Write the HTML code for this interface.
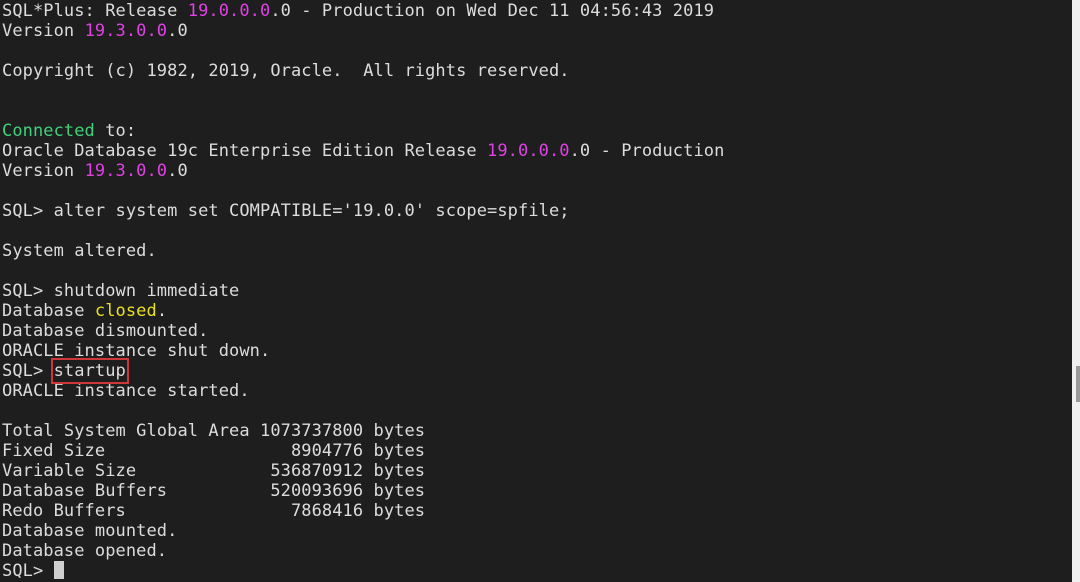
<!DOCTYPE html><html><head><style>
html,body{margin:0;padding:0;background:#1e1e1e;width:1080px;height:582px;overflow:hidden}
pre{margin:0;position:absolute;left:2px;top:1px;font-family:"DejaVu Sans Mono","Liberation Mono",monospace;font-size:17px;line-height:20px;color:#dcdcdc;letter-spacing:0.085px}
.m{color:#e040e6}.g{color:#3fd27a}.y{color:#e8e020}
.box{outline:2px solid #d0373a;outline-offset:1px}
.cur{background:#d0d0d0;display:inline-block;width:10px;height:18px;vertical-align:-3px}
.sb{position:absolute;left:1072px;top:0;width:8px;height:582px;background:#f0f0f0}
.th{position:absolute;left:1076px;top:366px;width:4px;height:36px;background:#9a9a9a}
</style></head><body>
<pre>SQL*Plus: Release <span class="m">19.0.0.0</span>.0 - Production on Wed Dec 11 04:56:43 2019
Version <span class="m">19.3.0.0</span>.0

Copyright (c) 1982, 2019, Oracle.  All rights reserved.


<span class="g">Connected</span> to:
Oracle Database 19c Enterprise Edition Release <span class="m">19.0.0.0</span>.0 - Production
Version <span class="m">19.3.0.0</span>.0

SQL&gt; alter system set COMPATIBLE='19.0.0' scope=spfile;

System altered.

SQL&gt; shutdown immediate
Database <span class="y">closed</span>.
Database dismounted.
ORACLE instance shut down.
SQL&gt; <span class="box">startup</span>
ORACLE instance started.

Total System Global Area 1073737800 bytes
Fixed Size                  8904776 bytes
Variable Size             536870912 bytes
Database Buffers          520093696 bytes
Redo Buffers                7868416 bytes
Database mounted.
Database opened.
SQL&gt; <span class="cur"></span></pre>
<div class="sb"></div><div class="th"></div>
</body></html>
